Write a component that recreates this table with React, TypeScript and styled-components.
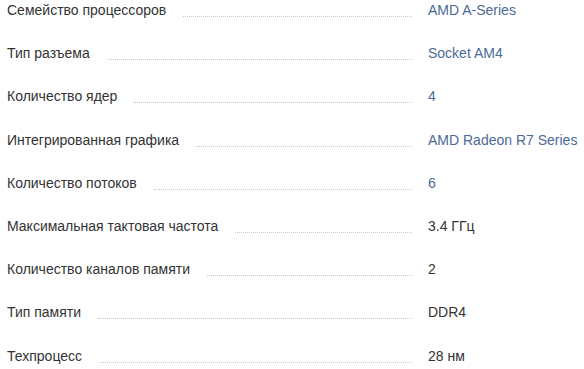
import React from "react";
import styled, { createGlobalStyle } from "styled-components";

type Spec = { name: string; value: string; link?: boolean };

const specs: Spec[] = [
  { name: "Семейство процессоров", value: "AMD A-Series", link: true },
  { name: "Тип разъема", value: "Socket AM4", link: true },
  { name: "Количество ядер", value: "4", link: true },
  { name: "Интегрированная графика", value: "AMD Radeon R7 Series", link: true },
  { name: "Количество потоков", value: "6", link: true },
  { name: "Максимальная тактовая частота", value: "3.4 ГГц" },
  { name: "Количество каналов памяти", value: "2" },
  { name: "Тип памяти", value: "DDR4" },
  { name: "Техпроцесс", value: "28 нм" },
];

const App = () => {
  return (
    <>
      <GlobalStyle />
      <List>
        {specs.map((s) => (
          <Row key={s.name}>
            <Name>{s.name}</Name>
            <Dots />
            <Value $link={s.link}>{s.value}</Value>
          </Row>
        ))}
      </List>
    </>
  );
};

export default App;

const GlobalStyle = createGlobalStyle`
  body {
    margin: 0;
    background: #fff;
    font-family: "Liberation Sans", Arial, sans-serif;
  }
`;

const List = styled.ul`
  list-style: none;
  margin: 0;
  padding: 0 0 0 7px;
  width: 584px;
  box-sizing: border-box;
  display: flex;
  flex-direction: column;
`;

const Row = styled.li`
  height: 43.2px;
  display: flex;
  align-items: flex-start;
  font-size: 14px;
  line-height: 21px;

  &:last-child {
    height: auto;
  }
`;

const Name = styled.span`
  color: #333;
  white-space: nowrap;
`;

const Dots = styled.span`
  flex: 1;
  height: 16px;
  margin: 0 16px 0 17px;
  border-bottom: 1px dotted #c8c8c8;
`;

const Value = styled.span<{ $link?: boolean }>`
  width: 156px;
  flex-shrink: 0;
  white-space: nowrap;
  color: ${(p) => (p.$link ? "#4b6a97" : "#333")};
  cursor: ${(p) => (p.$link ? "pointer" : "default")};
`;
